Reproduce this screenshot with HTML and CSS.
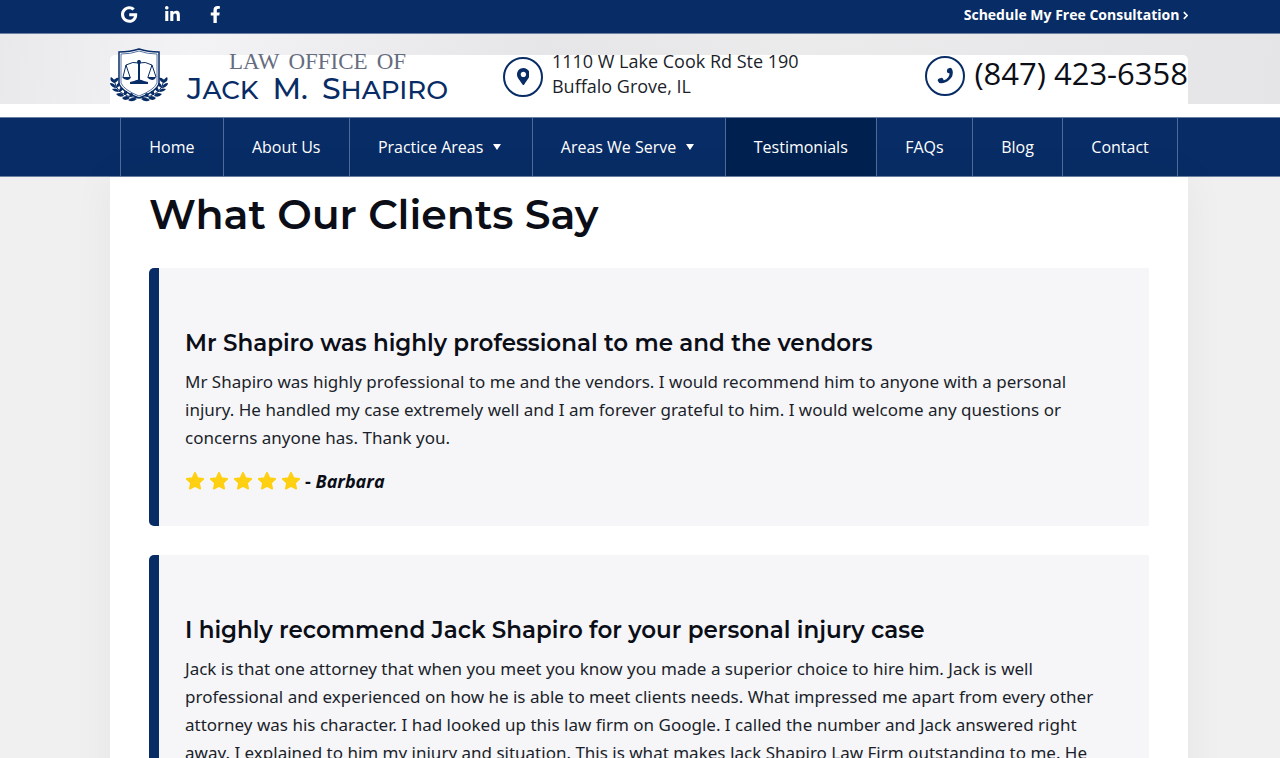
FILE: index.html
```
<!DOCTYPE html>
<html lang="en">
<head>
    <meta charset="UTF-8">
    <meta name="viewport" content="width=device-width, initial-scale=1.0">
    <title>Testimonials | Law Office of Jack M. Shapiro</title>
    <link rel="stylesheet" href="styles.css">
</head>
<body>
    <svg class="sprite" aria-hidden="true">
        <symbol id="star" viewBox="0 0 24 24">
            <path d="M12 2l3 6.400 7 1-5.100 4.900 1.300 7-6.200-3.400-6.200 3.400 1.300-7L2 9.400l7-1z" stroke-width="2" stroke-linejoin="round"/>
        </symbol>
    </svg>

    <div class="topbar">
        <div class="wrap">
            <div class="social">
                <a href="#" aria-label="Google"><svg viewBox="0 0 488 512"><path d="M488 261.800C488 403.300 391.100 504 248 504 110.800 504 0 393.200 0 256S110.800 8 248 8c66.800 0 123 24.500 166.300 64.900l-67.500 64.900C258.500 52.600 94.300 116.600 94.300 256c0 86.500 69.100 156.600 153.700 156.600 98.200 0 135-70.400 140.800-106.900H248v-85.300h236.100c2.300 12.700 3.900 24.900 3.900 41.400z"/></svg></a>
                <a href="#" aria-label="LinkedIn"><svg viewBox="0 0 448 512"><path d="M100.280 448H7.400V148.900h92.880zM53.790 108.100C24.090 108.100 0 83.500 0 53.800a53.790 53.790 0 0 1 107.580 0c0 29.700-24.100 54.300-53.790 54.300zM447.900 448h-92.680V302.400c0-34.700-.7-79.200-48.290-79.200-48.290 0-55.690 37.700-55.690 76.700V448h-92.780V148.900h89.080v40.800h1.300c12.400-23.500 42.690-48.300 87.880-48.300 94 0 111.280 61.900 111.280 142.300V448z"/></svg></a>
                <a href="#" aria-label="Facebook"><svg viewBox="0 0 320 512"><path d="M279.140 288l14.220-92.660h-88.910v-60.130c0-25.350 12.420-50.060 52.240-50.060h40.420V6.260S260.430 0 225.360 0c-73.220 0-121.080 44.380-121.080 124.720v70.620H22.890V288h81.390v224h100.170V288z"/></svg></a>
            </div>
            <a class="schedule" href="#">Schedule My Free Consultation
                <svg viewBox="0 0 6 10"><path d="M1 1l4 4-4 4"/></svg>
            </a>
        </div>
    </div>

    <header class="header">
        <div class="wrap">
            <a class="logo" href="#">
                <svg class="crest" viewBox="0 0 58 54">
                    <path class="shield" d="M9 4Q20 4 29 1Q38 4 49 4V36Q46 44 29 50Q12 44 9 36Z"/>
                    <path class="shield-in" d="M11 6Q21 6 29 3Q37 6 47 6V35Q44 42 29 48Q14 42 11 35Z"/>
                    <path class="line" d="M16 17Q23 13 29 15Q35 13 42 17M16 17L13 29M16 17L20 29M42 17L38 29M42 17L46 29"/>
                    <path class="fill" d="M28 12h2v20h-2zM24 33q5-3 10 0l4 1v2H20v-2zM12 29h9q-1 3-4 3t-5-3zM37 29h9q-1 3-4 3t-5-3z"/>
                    <circle class="fill" cx="29" cy="14" r="2"/>
                    <path class="branch" d="M4 31Q5 48 28 50M54 31Q53 48 30 50"/>
                    <g class="fill">
                        <path d="M4 35Q-1 33 1 29Q5 31 4 35ZM4 34Q5 29 9 30Q8 34 4 35ZM5 40Q0 38 0 35Q5 35 6 40ZM6 40Q6 35 10 35Q10 39 6 40ZM9 44Q4 44 2 41Q8 39 9 44ZM9 44Q9 39 13 40Q13 43 9 44ZM14 48Q9 50 6 46Q12 43 14 48ZM14 47Q13 42 17 43Q18 47 14 47ZM20 50Q15 54 12 50Q17 46 20 50ZM20 49Q18 45 22 45Q25 48 20 49ZM27 51Q22 55 18 52Q23 48 27 51Z"/>
                        <path d="M54 35Q59 33 57 29Q53 31 54 35ZM54 34Q53 29 49 30Q50 34 54 35ZM53 40Q58 38 58 35Q53 35 52 40ZM52 40Q52 35 48 35Q48 39 52 40ZM49 44Q54 44 56 41Q50 39 49 44ZM49 44Q49 39 45 40Q45 43 49 44ZM44 48Q49 50 52 46Q46 43 44 48ZM44 47Q45 42 41 43Q40 47 44 47ZM38 50Q43 54 46 50Q41 46 38 50ZM38 49Q40 45 36 45Q33 48 38 49ZM31 51Q36 55 40 52Q35 48 31 51Z"/>
                    </g>
                </svg>
                <span class="logo-text">
                    <span class="logo-small"><span>LAW</span> <span>OFFICE</span> <span>OF</span></span>
                    <span class="logo-name"><span><b>J</b>ACK</span> <span><b>M.</b></span> <span><b>S</b>HAPIRO</span></span>
                </span>
            </a>
            <address class="address">
                <span class="circle"><svg viewBox="0 0 384 512"><path d="M172.268 501.670C26.970 291.031 0 269.413 0 192 0 85.961 85.961 0 192 0s192 85.961 192 192c0 77.413-26.970 99.031-172.268 309.670-9.535 13.774-29.930 13.773-39.464 0zM192 272c44.183 0 80-35.817 80-80s-35.817-80-80-80-80 35.817-80 80 35.817 80 80 80z"/></svg></span>
                <span class="detail">1110 W Lake Cook Rd Ste 190<br>Buffalo Grove, IL</span>
            </address>
            <a class="phone" href="tel:8474236358">
                <span class="circle"><svg viewBox="0 0 50 50"><path d="M31 5L39 2Q44 2 46 11Q49 26 37 37Q26 48 12 48Q4 48 2 40Q2 36 6 34L12 32Q16 31 18 35L20 39Q28 37 33 30Q37 24 37 19L33 18Q29 18 29 12Z"/></svg></span>
                <span class="detail">(847) 423-6358</span>
            </a>
        </div>
    </header>

    <nav class="nav">
        <ul class="wrap">
            <li><a href="#">Home</a></li>
            <li><a href="#">About Us</a></li>
            <li><a class="drop" href="#">Practice Areas</a></li>
            <li><a class="drop" href="#">Areas We Serve</a></li>
            <li><a class="active" href="#">Testimonials</a></li>
            <li><a href="#">FAQs</a></li>
            <li><a href="#">Blog</a></li>
            <li><a href="#">Contact</a></li>
        </ul>
    </nav>

    <div class="wrap">
        <main class="content">
            <h1>What Our Clients Say</h1>
            <article class="review">
                <h2>Mr Shapiro was highly professional to me and the vendors</h2>
                <p>Mr Shapiro was highly professional to me and the vendors. I would recommend him to anyone with a personal injury. He handled my case extremely well and I am forever grateful to him. I would welcome any questions or concerns anyone has. Thank you.</p>
                <div class="rating">
                    <span class="stars" role="img" aria-label="5 stars">
                        <svg><use href="#star"/></svg>
                        <svg><use href="#star"/></svg>
                        <svg><use href="#star"/></svg>
                        <svg><use href="#star"/></svg>
                        <svg><use href="#star"/></svg>
                    </span>
                    <strong>- <em>Barbara</em></strong>
                </div>
            </article>
            <article class="review">
                <h2>I highly recommend Jack Shapiro for your personal injury case</h2>
                <p>Jack is that one attorney that when you meet you know you made a superior choice to hire him. Jack is well professional and experienced on how he is able to meet clients needs. What impressed me apart from every other attorney was his character. I had looked up this law firm on Google. I called the number and Jack answered right away. I explained to him my injury and situation. This is what makes Jack Shapiro Law Firm outstanding to me. He</p>
            </article>
        </main>
    </div>
</body>
</html>
```
FILE: styles.css
```
*{
    box-sizing: border-box;
}
body{
    margin: 0;
    background: #f0f0f0;
    color: #1b1f2a;
    font: 18px/28px "Open Sans", "Noto Sans", sans-serif;
}
a{
    color: inherit;
    text-decoration: none;
}
ul{
    margin: 0;
    padding: 0;
    list-style: none;
}
.sprite{
    display: none;
}
.wrap{
    margin: 0 92px 0 110px;
}

/* top bar */
.topbar{
    background: #082c65;
    border-bottom: 1px solid #6b7fa3;
    color: #fff;
}
.topbar .wrap{
    display: flex;
    justify-content: space-between;
    align-items: center;
    height: 33px;
    padding-bottom: 4px;
}
.social{
    display: flex;
    padding-left: 10px;
    gap: 24px;
}
.social a{
    display: flex;
    justify-content: center;
    width: 19px;
}
.social svg{
    height: 17px;
    fill: #fff;
}
.schedule{
    font-size: 14px;
    font-weight: 700;
}
.schedule svg{
    width: 5px;
    height: 9px;
    fill: none;
    stroke: #fff;
    stroke-width: 2;
}

/* header */
.header{
    background: linear-gradient(100deg, #e9e9eb, #f3f3f5 15%, #e6e6e8 42%, #ebebec 62%, #e5e5e7) no-repeat #fff;
    background-size: 100% 70px;
}
.header .wrap{
    position: relative;
    z-index: 0;
    display: flex;
    height: 83px;
}
.header .wrap::before{
    content: "";
    position: absolute;
    z-index: -1;
    top: 21px;
    right: 0;
    bottom: 0;
    left: 0;
    border-radius: 5px 5px 0 0;
    background: #fff;
}
.logo{
    display: flex;
    gap: 19px;
    padding-top: 14px;
    color: #082c65;
}
.crest{
    width: 58px;
    height: 54px;
}
.crest .shield{
    fill: #fff;
    stroke: #082c65;
    stroke-width: 1.500;
}
.crest .shield-in{
    fill: none;
    stroke: #5b75a2;
}
.crest .line, .crest .branch{
    fill: none;
    stroke: #082c65;
}
.crest .fill{
    fill: #082c65;
}
.logo-text{
    display: flex;
    flex-direction: column;
    align-items: center;
    padding-top: 2px;
}
.logo-small{
    display: flex;
    gap: 9px;
    color: #666d80;
    font: 23px/24px "Liberation Serif", serif;
}
.logo-name{
    display: flex;
    align-items: baseline;
    gap: 14px;
    font: 500 26px/30px Montserrat, Lato, sans-serif;
}
.logo-name b{
    font-size: 30px;
    font-weight: 500;
}
.address, .phone{
    display: flex;
    align-items: center;
    gap: 9px;
    font-style: normal;
    white-space: nowrap;
}
.address{
    margin-left: 55px;
    padding-top: 2px;
    line-height: 25px;
}
.phone{
    margin-left: auto;
    color: #0b0e17;
    font-size: 31px;
}
.detail{
    padding-bottom: 5px;
}
.circle{
    display: flex;
    justify-content: center;
    align-items: center;
    width: 40px;
    height: 40px;
    border: 2px solid #082c65;
    border-radius: 50%;
}
.circle svg{
    height: 17px;
    fill: #082c65;
}

/* navigation */
.nav{
    background: #082c65;
    border-top: 1px solid #6b7fa3;
    border-bottom: 1px solid #6b7fa3;
    color: #fff;
    font-size: 16px;
    white-space: nowrap;
}
.nav ul{
    display: flex;
    padding: 0 10px;
}
.nav li{
    flex: 1 1 auto;
    border-left: 1px solid #50699a;
}
.nav li:last-child{
    border-right: 1px solid #50699a;
}
.nav a{
    display: flex;
    justify-content: center;
    align-items: center;
    height: 58px;
    padding: 0 28px;
}
.nav .active{
    background: #00204f;
}
.nav .drop::after{
    content: "";
    margin: 0 2px 0 10px;
    border: 4px solid transparent;
    border-top: 6px solid #fff;
    border-bottom: 0;
}

/* testimonials */
.content{
    padding: 12px 39px 30px;
    background: #fff;
    box-shadow: 0 0 40px rgba(0, 0, 0, 0.05);
}
h1, h2{
    color: #0b0e17;
    font-family: Montserrat, Inter, sans-serif;
}
h1{
    margin: 0 0 28px;
    font-size: 41px;
    font-weight: 600;
    line-height: 51px;
}
.review{
    margin-bottom: 29px;
    padding: 58px 30px 31px 26px;
    border-left: 10px solid #082c65;
    border-radius: 5px 0 0 5px;
    background: #f6f6f9;
}
.review h2{
    margin: 0 0 7px;
    font-size: 23px;
    font-weight: 600;
    line-height: 35px;
}
.review p{
    margin: 0 0 15px;
    font-family: "Noto Sans", sans-serif;
    font-size: 17px;
}
.rating{
    display: flex;
    align-items: center;
    gap: 4px;
    color: #0b0e17;
}
.stars{
    display: flex;
    gap: 4px;
}
.stars svg{
    width: 20px;
    height: 20px;
    fill: #ffd012;
    stroke: #ffd012;
}
```
